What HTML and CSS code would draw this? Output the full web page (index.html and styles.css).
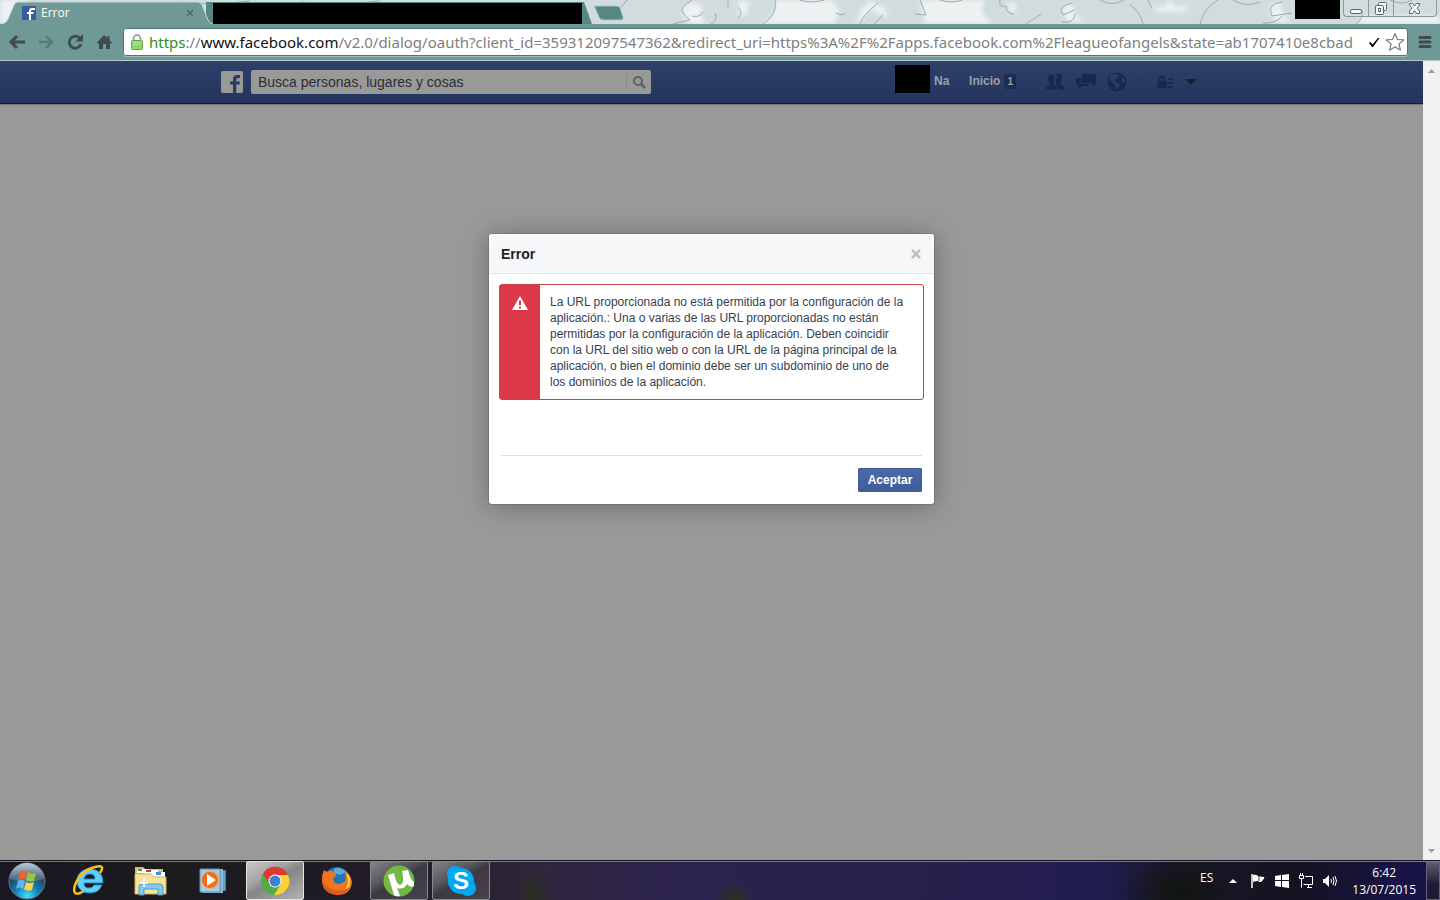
FILE: index.html
```html
<!DOCTYPE html>
<html lang="es">
<head>
  <meta charset="UTF-8">
  <meta name="viewport" content="width=device-width, initial-scale=1.0">
  <title>Error</title>
  <link rel="stylesheet" href="styles.css">
</head>
<body>
  <header class="tabstrip">
    <svg class="pattern" height="24" viewBox="0 0 1440 24" preserveAspectRatio="xMidYMid slice" aria-hidden="true">
      <defs>
        <filter id="soft" x="-10%" y="-40%" width="120%" height="180%"><feGaussianBlur stdDeviation="2"/></filter>
      </defs>
      <rect width="1440" height="24" fill="#d0dcdd"/>
      <g fill="#edf1f2" filter="url(#soft)">
        <path d="M0 0H30L10 24H0zM775 0H832L840 12L834 24H762Q778 12 775 0zM920 0H985L982 12L992 24H925zM682 14Q682 2 694 3L704 7L700 14L706 24H688zM738 0L750 2L746 16L738 16zM870 0L885 8L888 18L870 10L862 20L855 24L862 8zM1006 2L1018 4L1012 15zM1063 14Q1062 2 1073 4L1074 14L1084 22H1068zM1148 4L1163 8L1170 0L1178 8L1190 4L1184 12H1158zM1270 14Q1268 2 1281 3L1282 12L1290 22H1276zM1360 16H1440V24H1360z"/>
      </g>
      <g fill="none" stroke="#9dabad" stroke-width="1">
        <path d="M180 2Q210 6 250 1M300 2Q340 6 380 1M627 0L612 18M673 24L690 20Q676 10 686 4L692 0M692 16Q700 18 703 12M715 13Q718 20 711 24M728 0V7M738 7Q744 14 738 18M775 0Q778 14 763 24M800 0Q810 4 824 0M836 13Q840 16 845 14M860 24Q862 16 878 3M874 24L883 15M920 0L926 15L915 14M940 0Q952 4 962 0M1000 0Q998 8 1006 6Q1006 14 1014 14M1026 24L1041 14M1073 3Q1056 6 1063 15L1074 10M1075 14Q1074 24 1062 22M1100 0Q1112 7 1124 0M1130 4Q1141 14 1143 24M1148 0L1152 9M1200 24Q1204 8 1218 0M1233 0Q1246 8 1260 2M1282 2Q1266 4 1272 16L1292 13M1282 16Q1276 24 1263 23M1390 0Q1402 6 1412 0M1356 24Q1364 18 1362 10"/>
      </g>
    </svg>

    <div class="tab tab-active">
      <svg class="tab-shape" width="216" height="24" viewBox="0 0 216 24" aria-hidden="true">
        <path d="M0 24Q6 24 8 19L14 5Q15 2 18 2H198Q201 2 202 5L208 20Q210 24 213 24z" fill="#6f9997"/>
        <path d="M0 24Q6 24 8 19L14 5Q15 2 18 2H198Q201 2 202 5L208 20Q210 24 213 24" fill="none" stroke="#c5d7d6"/>
      </svg>
      <svg class="favicon" width="14" height="14" viewBox="0 0 14 14" aria-hidden="true">
        <rect width="14" height="14" fill="#3b5aa0"/>
        <path d="M7 14V8H5V6H7V5Q7 2 10 2H13V4H11Q9 4 9 5V6H12L11 8H9V14z" fill="#fff"/>
      </svg>
      <span class="tab-title">Error</span>
      <button class="tab-close" aria-label="Cerrar pestaña">
        <svg width="8" height="8" viewBox="0 0 8 8"><path d="M1 1L7 7M7 1L1 7" stroke="#4a6462" stroke-width="1.2"/></svg>
      </button>
    </div>
    <div class="tab tab-hidden"><div class="mask"></div></div>
    <button class="new-tab" aria-label="Nueva pestaña">
      <svg width="34" height="18" viewBox="0 0 34 18"><path d="M3 2H24Q27 2 28 4L31 13Q32 16 29 16H11Q8 16 7 13L3 4Q2 2 3 2z" fill="#568782" stroke="#adc6c4"/></svg>
    </button>

    <div class="user-mask"></div>
    <div class="window-controls">
      <button aria-label="Minimizar"><svg width="14" height="14" viewBox="0 0 14 14"><rect x="1.500" y="8.500" width="11" height="4" rx="1.500" fill="#f4f7f7" stroke="#5a676c"/></svg></button>
      <button aria-label="Restaurar"><svg width="14" height="14" viewBox="0 0 14 14" fill="#f4f7f7" stroke="#5a676c"><rect x="4.500" y="1.500" width="8" height="8" rx="1"/><rect x="1.500" y="4.500" width="8" height="9" rx="1"/><rect x="4.500" y="7.500" width="2" height="3"/></svg></button>
      <button class="wide" aria-label="Cerrar"><svg width="14" height="14" viewBox="0 0 14 14"><path d="M1.500 2.500H4.500L6.500 5L8.500 2.500H11.500V4L9 7L11.500 10V12.500H8.500L6.500 9.500L4.500 12.500H1.500V10L4 7L1.500 4z" fill="#f4f7f7" stroke="#5a676c"/></svg></button>
    </div>
  </header>

  <div class="toolbar">
    <div class="nav-buttons">
      <button aria-label="Atrás"><svg width="18" height="18" viewBox="0 0 18 18"><path d="M9 3L3 9L9 15M3 9H17" fill="none" stroke="#414b4b" stroke-width="3"/></svg></button>
      <button aria-label="Adelante"><svg width="18" height="18" viewBox="0 0 18 18"><path d="M9 3L15 9L9 15M15 9H2" fill="none" stroke="#557c7a" stroke-width="2.500"/></svg></button>
      <button aria-label="Recargar"><svg width="18" height="18" viewBox="0 0 18 18"><path d="M14 5.500A6 6 0 1 0 15 11" fill="none" stroke="#414b4b" stroke-width="2.800"/><path d="M17 1V8.500H9.500z" fill="#414b4b"/></svg></button>
      <button aria-label="Inicio"><svg width="18" height="18" viewBox="0 0 18 18"><path d="M9 2L2 9.500L3 11L4 10V16H8V11H11V16H15V10L16 11L17 9.500L14.500 7V3H12.500V5z" fill="#414b4b"/></svg></button>
    </div>

    <div class="omnibox">
      <svg class="lock" width="12" height="16" viewBox="0 0 12 16" aria-hidden="true">
        <path d="M2.500 8V4.500A3.500 3.500 0 0 1 9.500 4.500V8" fill="none" stroke="#8c9490" stroke-width="1.600"/>
        <rect x="0.500" y="6.500" width="11" height="9" rx="1" fill="#8cd66a" stroke="#62a84a"/>
        <path d="M2 8.500H10M2 10.500H10" stroke="#b2e896"/>
      </svg>
      <div class="url" role="textbox" contenteditable="true" spellcheck="false" aria-label="Dirección"><span class="secure">https</span>://<span class="host">www.facebook.com</span>/v2.0/dialog/oauth?client_id=359312097547362&amp;redirect_uri=https%3A%2F%2Fapps.facebook.com%2Fleagueofangels&amp;state=ab1707410e8cbad</div>
      <svg width="12" height="12" viewBox="0 0 12 12" aria-hidden="true"><path d="M1 7L2.500 6L4.500 8.500L10 2H11.500L5 11H4z" fill="#000"/></svg>
      <button class="star" aria-label="Añadir a marcadores"><svg width="20" height="20" viewBox="0 0 20 20"><path d="M10 1.500L12.400 7.400L18.700 7.900L13.900 12L15.400 18.200L10 14.900L4.600 18.200L6.100 12L1.300 7.900L7.600 7.400z" fill="#fff" stroke="#848484" stroke-width="1.300" stroke-linejoin="round"/></svg></button>
    </div>
    <button class="menu" aria-label="Menú"><svg width="14" height="14" viewBox="0 0 14 14"><path d="M2 2.500H12M2 7H12M2 11.500H12" stroke="#414b4b" stroke-width="3" stroke-linecap="round"/></svg></button>
  </div>

  <main class="viewport">
    <div class="page">
      <div class="bluebar">
        <div class="bluebar-inner">
          <a href="#" class="logo" aria-label="Facebook">
            <svg width="22" height="22" viewBox="0 0 22 22"><rect width="22" height="22" rx="2" fill="#999"/><path d="M12 22V13.500H9V10.500H12V8Q12 4 16 4H19V7H17Q15.300 7 15.300 8.700V10.500H19L18.500 13.500H15.300V22z" fill="#2a3c65"/></svg>
          </a>
          <form class="search">
            <input type="text" aria-label="Buscar" placeholder="Busca personas, lugares y cosas">
            <button type="button" aria-label="Buscar"><svg width="14" height="14" viewBox="0 0 14 14"><circle cx="6" cy="6" r="4" fill="none" stroke="#5e6063" stroke-width="2"/><path d="M9 9L13 13" stroke="#5e6063" stroke-width="2.500"/></svg></button>
          </form>
          <nav class="bluebar-nav">
            <div class="avatar-mask"></div>
            <a href="#" class="name">Na</a>
            <a href="#" class="home">Inicio <span class="count">1</span></a>
            <div class="jewels">
              <button aria-label="Solicitudes de amistad"><svg width="22" height="20" viewBox="0 0 22 20" fill="#1a284c"><path d="M13 2Q18 0 18 6Q18 9 16 11Q16 13 19 14Q21 15 21 18H15Q14 15 11 13Q13 11 12 8Q14 5 12 3z"/><path d="M3.500 6Q3.500 2 7.500 2Q11 2 11 6Q11 9 9.500 11Q9.500 13 12 14Q14 15 14 18H1Q1 15 3 14Q5.500 13 5.500 11Q3.500 9 3.500 6z" stroke="#2a3b66" stroke-width="0.800"/></svg></button>
              <button aria-label="Mensajes"><svg width="22" height="20" viewBox="0 0 22 20" fill="#1a284c"><path d="M8 2H20Q21 2 21 3V10Q21 11 20 11V15L16 11H8Q7 11 7 10V3Q7 2 8 2z"/><path d="M6 6H2Q1 6 1 7V13Q1 14 2 14H3V18L7 14H13V12H8Q6 12 6 10z"/></svg></button>
              <button aria-label="Notificaciones"><svg width="22" height="20" viewBox="0 0 22 20"><circle cx="11" cy="10" r="9.500" fill="#1a284c"/><path d="M5 3Q8 1 11 2L13 4L10 7L7 8L9 9L14 12L13 15L10 18L9 14L7 11L3 7zM15 5L19 7L19 11L16 9z" fill="#2a3c68"/></svg></button>
            </div>
            <button class="privacy" aria-label="Privacidad"><svg width="17" height="14" viewBox="0 0 17 14"><path d="M2.500 6V4A2.500 2.500 0 0 1 7.500 4V6" fill="none" stroke="#1a284c" stroke-width="2"/><path d="M0 6H10V13H0zM11 3H16V5H11zM11 7H16V9H11zM11 11H16V13H11z" fill="#1a284c"/></svg></button>
            <button class="account" aria-label="Cuenta"><svg width="12" height="6" viewBox="0 0 12 6"><path d="M0 0H12L6 6z" fill="#172038"/></svg></button>
          </nav>
        </div>
      </div>

      <section class="dialog" role="dialog" aria-labelledby="dialog-title">
        <div class="dialog-header">
          <h2 id="dialog-title">Error</h2>
          <button aria-label="Cerrar"><svg width="12" height="12" viewBox="0 0 12 12"><path d="M2 2L10 10M10 2L2 10" stroke="#bdbfc3" stroke-width="2.500"/></svg></button>
        </div>
        <div class="dialog-body">
          <div class="alert">
            <div class="alert-icon">
              <svg width="16" height="14" viewBox="0 0 16 14"><path d="M8 0L16 14H0z" fill="#fff"/><path d="M7 4.500H9V9H7zM7 10.500H9V12.500H7z" fill="#dc3847"/></svg>
            </div>
            <p>La URL proporcionada no está permitida por la configuración de la aplicación.: Una o varias de las URL proporcionadas no están permitidas por la configuración de la aplicación. Deben coincidir con la URL del sitio web o con la URL de la página principal de la aplicación, o bien el dominio debe ser un subdominio de uno de los dominios de la aplicación.</p>
          </div>
        </div>
        <div class="dialog-footer">
          <button>Aceptar</button>
        </div>
      </section>
    </div>
    <div class="scrollbar">
      <svg width="7" height="4" viewBox="0 0 7 4"><path d="M0 4H7L3.500 0z" fill="#9b9b9b"/></svg>
      <svg width="7" height="4" viewBox="0 0 7 4"><path d="M0 0H7L3.500 4z" fill="#9b9b9b"/></svg>
    </div>
  </main>

  <footer class="taskbar">
    <button class="start" aria-label="Inicio de Windows">
      <svg width="40" height="38" viewBox="0 0 40 38">
        <defs>
          <radialGradient id="orb" cx="50%" cy="92%" r="80%"><stop offset="0" stop-color="#3ee0ff"/><stop offset="0.400" stop-color="#1583b8"/><stop offset="0.800" stop-color="#25425c"/><stop offset="1" stop-color="#4b6476"/></radialGradient>
          <linearGradient id="shine" x1="0" y1="0" x2="0" y2="1"><stop offset="0" stop-color="#d4e0e8" stop-opacity="0.800"/><stop offset="1" stop-color="#8ba5b6" stop-opacity="0.300"/></linearGradient>
        </defs>
        <circle cx="20" cy="19" r="18" fill="url(#orb)" stroke="#60798a"/>
        <path d="M3 17A17 16 0 0 1 37 17Q20 23 3 17z" fill="url(#shine)"/>
        <path d="M13 10Q17 7 20 10L18 18Q15 15 11 18z" fill="#ee6130"/>
        <path d="M21 10Q25 13 29 11L27 19Q23 21 19 18z" fill="#97c83b"/>
        <path d="M11 19Q14 17 18 19L16 27Q12 24 9 27z" fill="#5eb6f2"/>
        <path d="M19 20Q23 22 27 20L25 28Q20 30 17 27z" fill="#ffd23d"/>
      </svg>
    </button>

    <div class="apps">
      <button aria-label="Internet Explorer">
        <svg width="34" height="34" viewBox="0 0 34 34">
          <path d="M18 5C9 5 5 11 5 17C5 25 11 29 18 29Q27 29 30 21H22Q21 24 17 24Q12 24 12 19H31C31 10 26 5 18 5zM12 15Q13 10 18 10Q23 10 23 15z" fill="#62cdf8" stroke="#1989cb"/>
          <path d="M28 9Q34 0 23 3Q9 6 3 21Q0 32 8 29L12 27" fill="none" stroke="#f6bf21" stroke-width="2.500"/>
        </svg>
      </button>
      <button aria-label="Explorador de Windows">
        <svg width="34" height="34" viewBox="0 0 34 34">
          <path d="M1 3H9L11 5H29V28H1z" fill="#d9bd66"/>
          <path d="M3 5H15V9H3z" fill="#fff"/><path d="M4 5H8V7H4z" fill="#24a64a"/>
          <path d="M10 6H24V11H10z" fill="#fff"/><path d="M12 6H17V8H12z" fill="#d63a2c"/>
          <path d="M16 8H31V13H16z" fill="#fff"/><path d="M22 8H27V11H22z" fill="#3195d7"/>
          <path d="M1 10H17L20 13H32V30H1z" fill="#f7e39a" stroke="#cdb15a"/>
          <path d="M5 31V23Q5 20 8 20H26Q29 20 29 23V31H24V25H10V31z" fill="#87c9ea" stroke="#4c9cc6"/>
          <path d="M10 14V23M6 19H14" stroke="#fff" stroke-width="1.500"/>
        </svg>
      </button>
      <button aria-label="Reproductor de Windows Media">
        <svg width="34" height="34" viewBox="0 0 34 34">
          <path d="M8 6H30V27H8z" fill="#3f7fa9"/><path d="M6 5H27V29H6z" fill="#8ab9d6"/><path d="M4 5H24V28H4z" fill="#a4cde3" stroke="#5b94b8"/>
          <circle cx="14" cy="16" r="8.500" fill="#ee6d1c" stroke="#f8a767"/><path d="M11 10L20 16L11 22z" fill="#fff"/><path d="M28 7V26" stroke="#8bc8e8"/>
        </svg>
      </button>
      <button class="current" aria-label="Google Chrome">
        <svg width="34" height="34" viewBox="0 0 34 34">
          <circle cx="17" cy="17" r="14" fill="#4fae49"/>
          <path d="M17 17L5 10A14 14 0 0 1 30 11z" fill="#dd3b31"/>
          <path d="M17 11H30A14 14 0 0 1 16 31L23 20z" fill="#fcd334"/>
          <path d="M5 10L12 21L20 11z" fill="#dd3b31"/>
          <circle cx="17" cy="17" r="6.500" fill="#fff"/><circle cx="17" cy="17" r="5.500" fill="#3d82d0"/>
        </svg>
      </button>
      <button aria-label="Firefox">
        <svg width="34" height="34" viewBox="0 0 34 34">
          <circle cx="17" cy="16" r="13" fill="#2474b9"/>
          <path d="M14 5Q20 2 26 8L20 11L14 9z" fill="#58afd9"/>
          <path d="M4 6L7 8Q12 5 15 9Q18 11 14 13Q12 16 15 19Q20 22 25 17Q27 12 24 7Q31 10 32 18Q31 31 17 31Q2 29 2 16Q2 10 4 6z" fill="#ee7620"/>
          <path d="M26 8Q33 15 29 23Q25 30 17 30Q29 25 28 16z" fill="#fcd237"/>
          <path d="M3 18Q4 30 17 31Q26 31 30 23Q17 31 7 22z" fill="#e05a20"/>
        </svg>
      </button>
      <button class="open" aria-label="uTorrent">
        <svg width="34" height="34" viewBox="0 0 34 34">
          <circle cx="17" cy="17" r="15.500" fill="#72b843"/>
          <path d="M6 11L12 9Q14 20 18 21Q23 20 20 7L26 6Q29 17 32 18V22Q28 24 25 20Q22 26 15 24L18 32Q14 33 12 31z" fill="#fff"/>
        </svg>
      </button>
      <button class="open" aria-label="Skype">
        <svg width="34" height="34" viewBox="0 0 34 34"><circle cx="17" cy="17" r="13" fill="#00aaf1"/><circle cx="11" cy="10" r="8" fill="#00aaf1"/><circle cx="24" cy="24" r="8" fill="#00aaf1"/></svg>
        <span class="skype-s">S</span>
      </button>
    </div>

    <div class="tray">
      <span class="lang">ES</span>
      <button class="more" aria-label="Mostrar iconos ocultos"><svg width="8" height="4" viewBox="0 0 8 4"><path d="M0 4H8L4 0z" fill="#fff"/></svg></button>
      <div class="tray-icons">
        <svg width="16" height="16" viewBox="0 0 16 16"><path d="M2 1V15" stroke="#fff" stroke-width="1.500"/><path d="M3 2Q6 1 8 3Q11 4 14 4Q15 4 13 7L11 9H9L8 8Q6 8 3 9z" fill="#fff"/><path d="M9 3V8" stroke="#444"/></svg>
        <svg width="16" height="16" viewBox="0 0 16 16" fill="#fff"><path d="M1 3L7 2V7H1zM8 2L15 1V7H8zM1 8H7V14L1 13zM8 8H15V15L8 14z"/></svg>
        <svg width="16" height="16" viewBox="0 0 16 16" fill="none" stroke="#fff"><path d="M7 3.500H14.500V11.500H5.500M9 14.500H14M10.500 12V14M1.500 2.500H5.500V5.500H1.500zM2.500 0V2M4.500 0V2M3.500 6V14.500"/></svg>
        <svg width="16" height="16" viewBox="0 0 16 16"><path d="M1 6H3L7 2V14L3 10H1z" fill="#fff"/><path d="M9 6Q10 8 9 10M11 4Q13 8 11 12M13 3Q16 8 13 13" fill="none" stroke="#fff"/></svg>
      </div>
      <div class="clock"><time>6:42</time><span>13/07/2015</span></div>
      <button class="show-desktop" aria-label="Mostrar escritorio"></button>
    </div>
  </footer>
</body>
</html>
```

FILE: styles.css
```css
* {
  box-sizing: border-box;
}

body {
  margin: 0;
  height: 100vh;
  display: flex;
  flex-direction: column;
  overflow: hidden;
  font-family: "Liberation Sans", Arial, sans-serif;
  font-size: 12px;
}

button {
  border: 0;
  padding: 0;
  margin: 0;
  background: none;
  display: flex;
  align-items: center;
  justify-content: center;
  font-family: inherit;
}

svg {
  display: block;
  flex-shrink: 0;
}

a {
  text-decoration: none;
}

/* tab strip */
.tabstrip {
  position: relative;
  display: flex;
  align-items: flex-start;
  height: 24px;
  flex-shrink: 0;
  background: #d0dcdd;
}

.pattern {
  position: absolute;
  left: 0;
  top: 0;
  width: 100%;
}

.tab {
  position: relative;
  height: 24px;
  display: flex;
  align-items: center;
}

.tab-active {
  width: 206px;
  padding: 2px 12px 0 22px;
  z-index: 1;
}

.tab-shape {
  position: absolute;
  left: 0;
  top: 0;
}

.favicon {
  position: relative;
}

.tab-title {
  position: relative;
  flex: 1;
  margin-left: 5px;
  color: #fff;
  font-family: "Open Sans", sans-serif;
  font-size: 12px;
  line-height: 16px;
}

.tab-close {
  position: relative;
}

.tab-hidden {
  width: 386px;
  padding: 3px 0 0 7px;
  background: #568782;
  clip-path: polygon(0 2px, 378px 2px, 100% 100%, 0 100%);
}

.mask {
  width: 369px;
  height: 21px;
  background: #000;
}

.new-tab {
  position: relative;
  margin-top: 4px;
}

.user-mask {
  position: relative;
  margin-left: auto;
  width: 45px;
  height: 19px;
  background: #000;
}

.window-controls {
  position: relative;
  display: flex;
  height: 17px;
  margin: 0 3px;
  border: 1px solid #8c999c;
  border-top: 0;
  border-radius: 0 0 4px 4px;
}

.window-controls button {
  width: 25px;
  border-right: 1px solid #8c999c;
}

.window-controls .wide {
  width: 42px;
  border-right: 0;
}

/* toolbar */
.toolbar {
  display: flex;
  align-items: center;
  gap: 10px;
  height: 37px;
  flex-shrink: 0;
  padding: 0 8px;
  background: #6f9997;
  border-bottom: 1px solid #b4c8c7;
}

.nav-buttons {
  display: flex;
  gap: 11px;
}

.omnibox {
  flex: 1;
  min-width: 0;
  display: flex;
  align-items: center;
  height: 28px;
  padding: 0 2px 0 7px;
  background: #fff;
  border: 1px solid #4c7672;
  border-radius: 3px;
  box-shadow: 0 1px 0 #9fbcba;
}

.url {
  flex: 1;
  min-width: 0;
  margin: 0 6px;
  overflow: hidden;
  white-space: nowrap;
  color: #808080;
  font-family: "Noto Sans", "Open Sans", sans-serif;
  font-size: 15px;
  line-height: 22px;
}

.secure {
  color: #2a9026;
}

.host {
  color: #111;
}

.star {
  margin-left: 5px;
}

.menu {
  width: 14px;
}

/* web page */
.viewport {
  flex: 1;
  min-height: 0;
  display: flex;
}

.page {
  flex: 1;
  background: #999;
  overflow: hidden;
}

.scrollbar {
  width: 17px;
  padding: 8px 0 7px;
  display: flex;
  flex-direction: column;
  align-items: center;
  justify-content: space-between;
  background: #f1f1f1;
}

.bluebar {
  height: 43px;
  background: linear-gradient(#2f4068, #23355e);
  border-bottom: 1px solid #141d38;
  box-shadow: 0 1px 1px #777;
}

.bluebar-inner {
  display: flex;
  align-items: center;
  max-width: 981px;
  height: 42px;
  margin: 0 auto;
}

.search {
  display: flex;
  align-items: center;
  width: 400px;
  height: 24px;
  margin-left: 8px;
  background: #999;
  border-radius: 2px;
}

.search input {
  flex: 1;
  min-width: 0;
  height: 24px;
  padding: 0 7px;
  border: 0;
  background: none;
  color: #2c2d30;
  font-family: inherit;
  font-size: 14px;
}

.search input::placeholder {
  color: #2c2d30;
}

.search button {
  width: 25px;
  height: 16px;
  border-left: 1px solid #868686;
}

.bluebar-nav {
  display: flex;
  align-items: center;
  margin-left: auto;
  padding-right: 5px;
  font-weight: bold;
}

.bluebar-nav a {
  margin-bottom: 2px;
  color: #9ba0aa;
}

.avatar-mask {
  width: 35px;
  height: 28px;
  margin-bottom: 6px;
  background: #000;
}

.name {
  width: 28px;
  padding-left: 4px;
  border-right: 1px solid #25355d;
}

.home {
  display: flex;
  align-items: center;
  gap: 4px;
  margin-left: 11px;
}

.count {
  padding: 0 3px;
  background: #1d2c52;
  border-radius: 2px;
  font-size: 10px;
  line-height: 15px;
}

.jewels {
  display: flex;
  gap: 9px;
  margin-left: 28px;
  padding-right: 13px;
}

.privacy {
  height: 14px;
  padding-left: 15px;
  border-left: 1px solid #25355d;
}

.account {
  margin-left: 11px;
}

/* error dialog */
.dialog {
  width: 445px;
  max-width: 100%;
  margin: 130px auto 0;
  background: #fff;
  border-radius: 3px;
  box-shadow: 0 2px 26px rgba(0, 0, 0, 0.3), 0 0 0 1px rgba(0, 0, 0, 0.1);
}

.dialog-header {
  display: flex;
  align-items: center;
  justify-content: space-between;
  height: 40px;
  padding: 0 12px;
  background: #f6f7f8;
  border-bottom: 1px solid #e3e4e6;
  border-radius: 3px 3px 0 0;
}

.dialog-header h2 {
  margin: 0;
  color: #1d2129;
  font-size: 14px;
  line-height: 18px;
}

.dialog-body {
  min-height: 181px;
  padding: 10px;
}

.alert {
  display: flex;
  border: 1px solid #cb3f4c;
  border-radius: 3px;
}

.alert-icon {
  width: 40px;
  flex-shrink: 0;
  padding: 11px 12px;
  background: #dc3847;
}

.alert p {
  margin: 0;
  padding: 9px 18px 9px 10px;
  color: #373e4d;
  font-size: 12px;
  line-height: 16px;
}

.dialog-footer {
  display: flex;
  justify-content: flex-end;
  margin: 0 12px;
  padding: 12px 0;
  border-top: 1px solid #dcdee3;
}

.dialog-footer button {
  min-width: 64px;
  height: 24px;
  padding: 0 8px;
  border: 1px solid #405b98;
  border-radius: 1px;
  background: linear-gradient(#4b69a8, #3f5c9b);
  color: #fff;
  font-size: 12px;
  font-weight: bold;
}

/* taskbar */
.taskbar {
  display: flex;
  height: 40px;
  flex-shrink: 0;
  border-top: 1px solid #15151b;
  box-shadow: inset 0 1px 0 #77757f;
  background:
    radial-gradient(ellipse 18px 30px at 37% 90%, #2b2f20, transparent),
    radial-gradient(ellipse 20px 20px at 51% 100%, #2b3220, transparent),
    radial-gradient(ellipse 60px 40px at 82% 80%, #11150f, transparent),
    linear-gradient(90deg, #1a1723, #1c1b1e 12%, #211c29 28%, #30263d 38%, #2b2250 48%, #281f4c 65%, #211d52 76%, #191728 82%, #141321 90%, #181445 97%);
}

.start {
  width: 54px;
}

.apps {
  display: flex;
  gap: 4px;
  margin-left: 6px;
}

.apps button {
  position: relative;
  width: 58px;
  height: 39px;
}

.apps .open,
.apps .current {
  border: 1px solid #8a888f;
  border-radius: 2px;
  background: linear-gradient(150deg, #858488, #5a575f 35%, #3c3943 50%, #47434f);
}

.apps .current {
  border-color: #e4e4e4;
  background: linear-gradient(150deg, #c9c9c9, #a4a4a4 35%, #858585 50%, #b3b3b3);
}

.skype-s {
  position: absolute;
  left: 0;
  right: 0;
  text-align: center;
  color: #fff;
  font-size: 24px;
  line-height: 28px;
  font-weight: bold;
}

.tray {
  display: flex;
  align-items: center;
  margin-left: auto;
  color: #fff;
  font-family: "Open Sans", sans-serif;
  font-size: 12px;
}

.lang {
  margin-bottom: 6px;
}

.more {
  margin: 0 13px 0 16px;
}

.tray-icons {
  display: flex;
  gap: 8px;
}

.clock {
  display: flex;
  flex-direction: column;
  align-items: center;
  margin: 0 10px 0 14px;
  line-height: 17px;
}

.show-desktop {
  width: 14px;
  height: 38px;
  border: 1px solid #66647a;
  background: linear-gradient(#5b5a70, #1d1b36 60%);
}
```
